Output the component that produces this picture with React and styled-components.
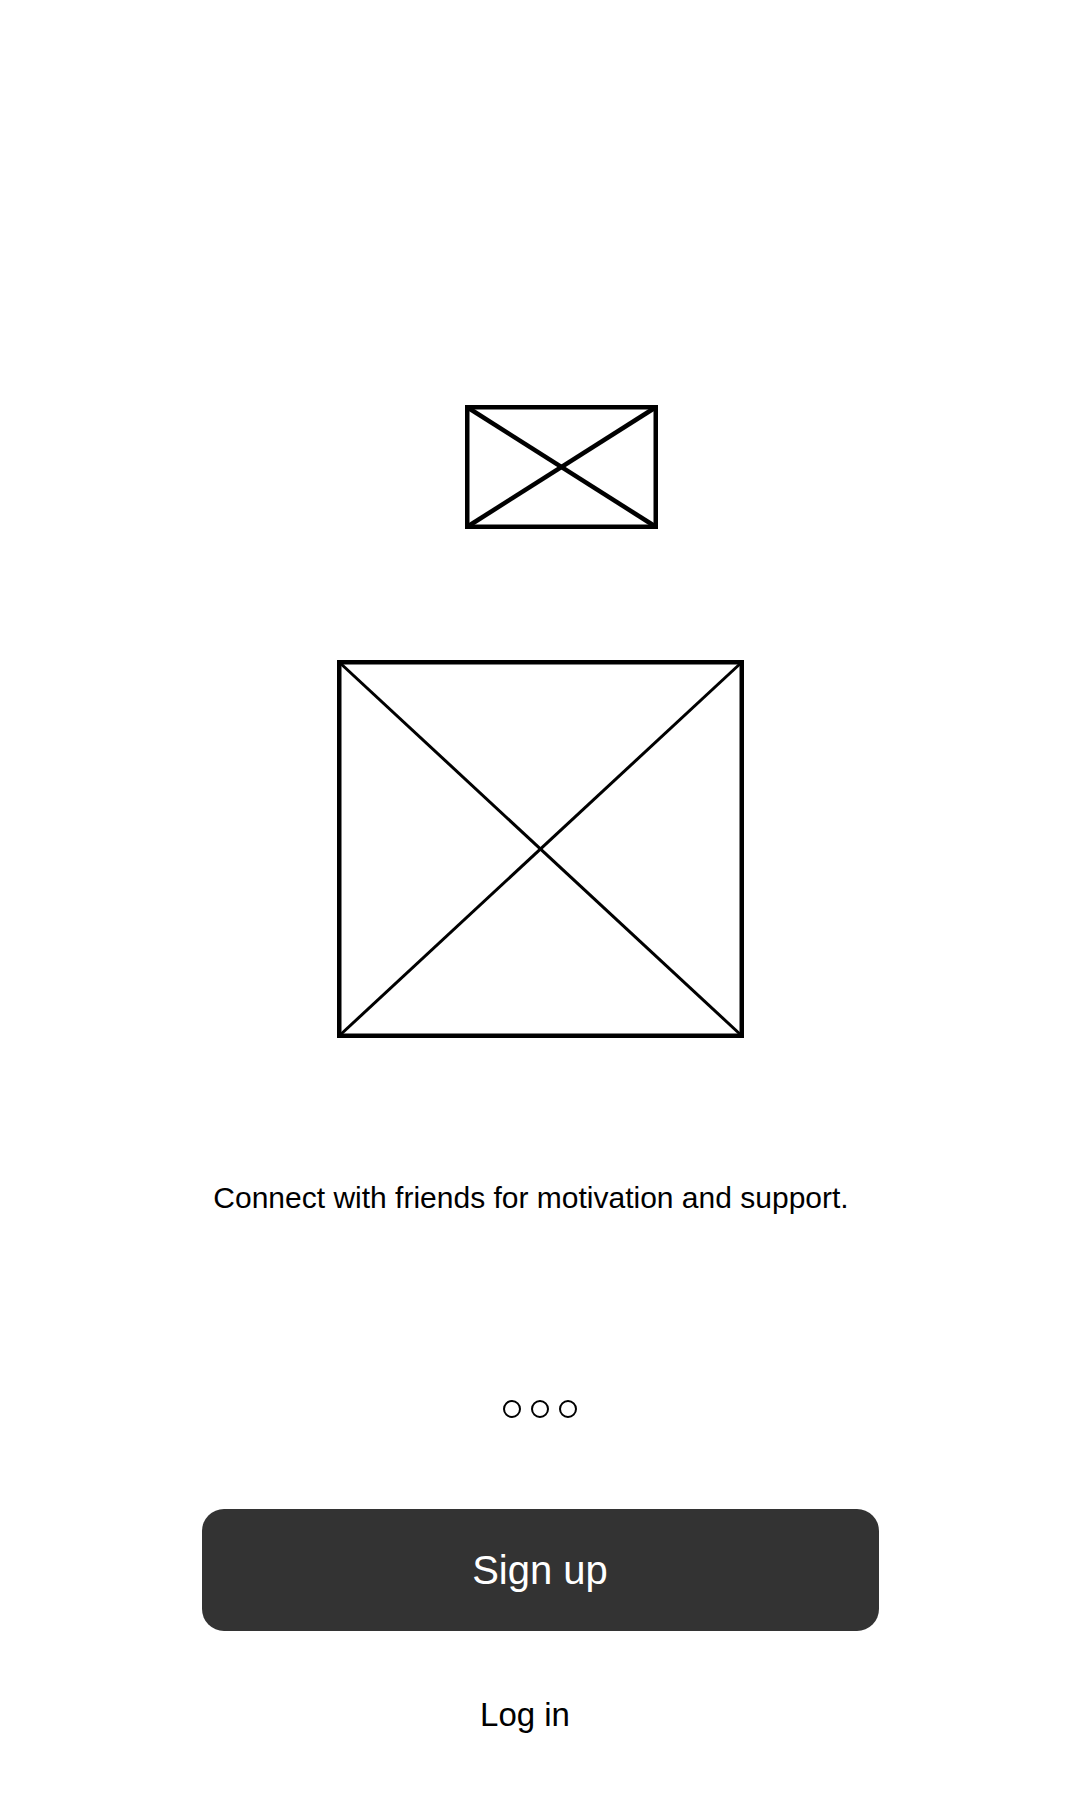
import React from 'react';
import styled, { createGlobalStyle } from 'styled-components';

const GlobalStyle = createGlobalStyle`
    html, body {
        margin: 0;
        padding: 0;
        background: #ffffff;
    }
    body {
        font-family: "Liberation Sans", Arial, sans-serif;
        color: #000000;
    }
`;

const Screen = styled.div`
    width: 1080px;
    height: 1800px;
    display: flex;
    flex-direction: column;
    align-items: center;
    padding-top: 405px;
    box-sizing: border-box;
`;

// placeholder images drawn as a box with a cross
const Placeholder = styled.svg`
    display: block;
    flex-shrink: 0;
    margin-top: ${props => props.$top || 0}px;
    margin-left: ${props => (props.$shift || 0) * 2}px;
`;

const Caption = styled.p`
    margin: 143px 0 0 ${-9 * 2}px;
    font-size: 30px;
    line-height: 34px;
    white-space: nowrap;
`;

const Dots = styled.div`
    display: flex;
    gap: 10px;
    margin-top: 185px;
`;

const Dot = styled.span`
    width: 18px;
    height: 18px;
    box-sizing: border-box;
    border: 2.5px solid #000;
    border-radius: 50%;
    background: ${props => (props.$active ? '#000' : 'transparent')};
`;

const PrimaryButton = styled.button`
    margin-top: 91px;
    width: 677px;
    height: 122px;
    border: none;
    border-radius: 22px;
    background: #333333;
    color: #ffffff;
    font-family: "Liberation Sans", Arial, sans-serif;
    font-size: 40px;
    cursor: pointer;
`;

const TextButton = styled.button`
    margin: 65px 0 0 ${-15 * 2}px;
    padding: 0;
    border: none;
    background: none;
    color: #000000;
    font-family: "Liberation Sans", Arial, sans-serif;
    font-size: 33px;
    line-height: 38px;
    cursor: pointer;
`;

function CrossBox({ width, height, frame, cross, top, shift }) {
    const h = frame / 2;
    return (
        <Placeholder width={width} height={height} viewBox={`0 0 ${width} ${height}`} $top={top} $shift={shift}>
            <rect x={h} y={h} width={width - frame} height={height - frame} fill="none" stroke="#000" strokeWidth={frame} />
            <line x1={h} y1={h} x2={width - h} y2={height - h} stroke="#000" strokeWidth={cross} />
            <line x1={width - h} y1={h} x2={h} y2={height - h} stroke="#000" strokeWidth={cross} />
        </Placeholder>
    );
}

export default function App() {
    return (
        <>
            <GlobalStyle />
            <Screen>
                <CrossBox width={193} height={124} frame={4.5} cross={4.5} shift={21} />
                <CrossBox width={407} height={378} frame={4.5} cross={3} top={131} />
                <Caption>Connect with friends for motivation and support.</Caption>
                <Dots>
                    <Dot />
                    <Dot />
                    <Dot />
                </Dots>
                <PrimaryButton>Sign up</PrimaryButton>
                <TextButton>Log in</TextButton>
            </Screen>
        </>
    );
}
